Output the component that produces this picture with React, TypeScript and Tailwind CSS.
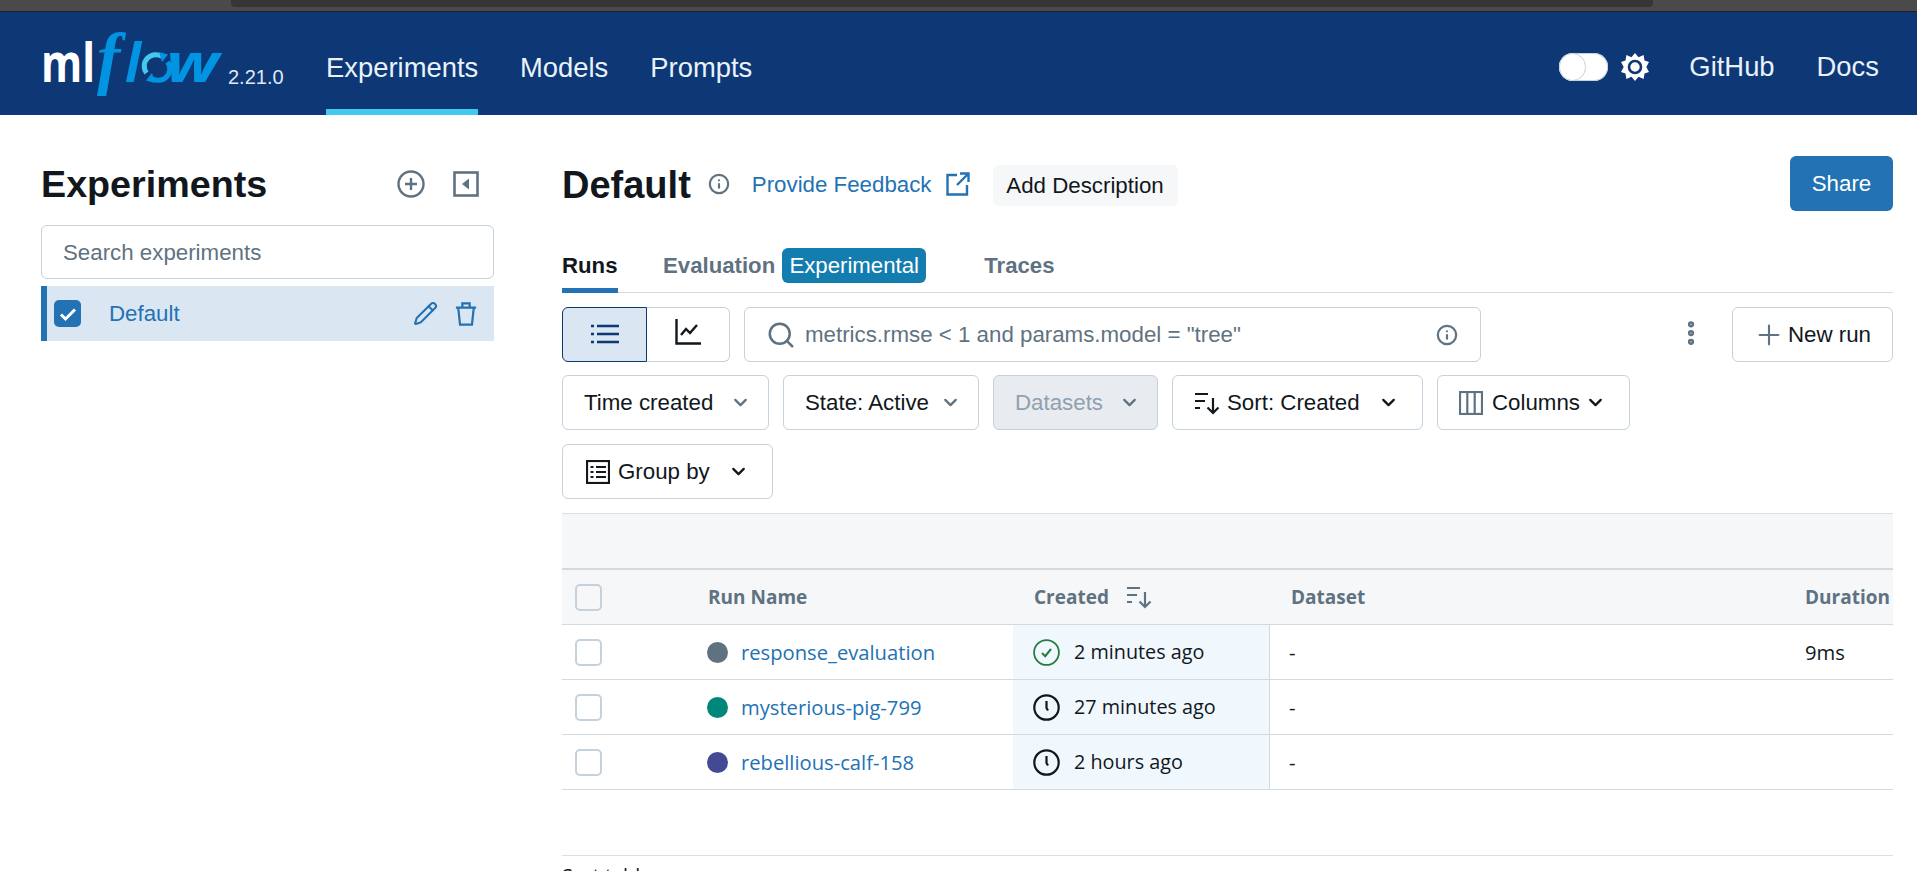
import React from "react";
import { ChevronDown, Plus, Info, Pencil, Search, EllipsisVertical } from "lucide-react";

const SortIcon = ({ className = "" }: { className?: string }) => (
  <svg viewBox="0 0 26 24" className={className} fill="none" stroke="currentColor" strokeWidth="2.2">
    <path d="M1 3h13M1 10h10M1 17h5" />
    <path d="M19 7v15M13.5 16.5l5.5 5.5 5.5-5.5" />
  </svg>
);

const ClockIcon = () => (
  <svg viewBox="0 0 27 27" className="w-[27px] h-[27px] text-[#11171c]" fill="none" stroke="currentColor" strokeWidth="2.2">
    <circle cx="13.5" cy="13.5" r="12.2" />
    <path d="M13.5 7v7l1.5 2.5" />
  </svg>
);

const CheckCircle = () => (
  <svg viewBox="0 0 27 27" className="w-[27px] h-[27px] text-[#277c43]" fill="none" stroke="currentColor" strokeWidth="1.8">
    <circle cx="13.5" cy="13.5" r="12.4" />
    <path d="M9 14l3.2 3.2L18 10" strokeWidth="2" />
  </svg>
);

const Sun = () => (
  <svg viewBox="0 0 28 28" className="w-[28px] h-[28px]">
    <path fill="#fff" d="M14 0l3.5 4.2L22.6 2l.9 5.4 4.5 1.6-2.7 5 2.7 5-4.5 1.6-.9 5.4-5.1-2.2L14 28l-3.5-4.2-5.1 2.2-.9-5.400L0 19l2.7-5L0 9l4.500-1.600.9-5.400 5.100 2.200z" />
    <circle cx="14" cy="14" r="6" fill="#fff" stroke="#0e3776" strokeWidth="2.6" />
  </svg>
);

const Logo = () => (
  <svg viewBox="0 0 188 103" className="w-[188px] h-[103px] shrink-0 ml-[41px]">
    <text x="0" y="70" fontSize="54" fontWeight="700" fill="#fff" fontFamily="Open Sans" textLength="54" lengthAdjust="spacingAndGlyphs">ml</text>
    <text x="56" y="69" fontSize="70" fontWeight="700" fontStyle="italic" fill="#0194e2" fontFamily="Liberation Serif">f</text>
    <text x="84" y="70" fontSize="53" fontWeight="700" fontStyle="italic" fill="#0194e2" fontFamily="Open Sans">l</text>
    <g transform="translate(102 41)" fill="none" strokeWidth="5">
      <path d="M3.500 20A11.500 11.500 0 0 1 19 3.500" stroke="#43c9ed" />
      <path d="M24.500 9A11.500 11.500 0 0 1 9 25.500" stroke="#0194e2" />
      <path d="M16 -1l9 2.500-6 7.500z" fill="#0194e2" />
      <path d="M12 30l-9-2.500 6-7.500z" fill="#0194e2" />
    </g>
    <text x="125" y="70" fontSize="53" fontWeight="700" fontStyle="italic" fill="#0194e2" fontFamily="Open Sans" textLength="53" lengthAdjust="spacingAndGlyphs">w</text>
  </svg>
);

const FilterButton = ({
  children, width, disabled, chevron = "text-[#5f7281]", pad = "pl-[21px] pr-[17px]", justify = "justify-between",
}: { children: React.ReactNode; width: string; disabled?: boolean; chevron?: string; pad?: string; justify?: string }) => (
  <div className={`${width} h-[55px] shrink-0 rounded-[6px] border border-[#c5d1db] flex items-center ${justify} ${pad} text-[22.3px] ${disabled ? "bg-[#e8ebef] text-[#8fa1b0]" : "bg-white text-[#11171c]"}`}>
    {children}
    <ChevronDown className={`w-[21px] h-[21px] ${chevron}`} strokeWidth={2.6} />
  </div>
);

const rows = [
  { name: "response_evaluation", color: "bg-[#5f7281]", time: "2 minutes ago", ok: true, duration: "9ms" },
  { name: "mysterious-pig-799", color: "bg-[#00877a]", time: "27 minutes ago", ok: false, duration: "" },
  { name: "rebellious-calf-158", color: "bg-[#434a93]", time: "2 hours ago", ok: false, duration: "" },
];

const tableFont = "font-['Open_Sans',sans-serif]";

export default function App() {
  return (
    <div className="w-[1917px] h-[871px] overflow-hidden bg-white font-['Liberation_Sans',Arial,sans-serif] text-[#11171c] flex flex-col">
      <div className="h-[12px] bg-[#4a4a4a] border-b border-[#1f1f1f] shrink-0 pl-[231px] pr-[264px]">
        <div className="h-[7px] bg-[#363636] rounded-b-[4px]" />
      </div>

      <header className="h-[103px] shrink-0 bg-[#0e3776] flex items-stretch text-[#e9f2f9]">
        <Logo />
        <span className="self-start mt-[50px] -ml-[1px] text-[20px] w-[98px] text-[#dfe9f2]">2.21.0</span>
        <nav className="flex text-[27.4px] gap-[42px]">
          <a className="h-full flex items-center border-b-[6px] border-[#43c9ed] pt-[14px] w-[152px] whitespace-nowrap">Experiments</a>
          <a className="h-full flex items-center pt-[8px]">Models</a>
          <a className="h-full flex items-center pt-[8px]">Prompts</a>
        </nav>
        <div className="ml-auto flex items-center gap-[13px] pr-[38px] pt-[7px] text-[27.4px]">
          <div className="w-[49px] h-[28px] rounded-full bg-white relative shadow-[inset_0_0_0_1px_#c5d1db]">
            <div className="absolute left-0 top-0 w-[27px] h-[28px] rounded-full bg-white border border-[#c5d1db]" />
          </div>
          <Sun />
          <a className="ml-[27px]">GitHub</a>
          <a className="ml-[29px]">Docs</a>
        </div>
      </header>

      <main className="flex flex-1 min-h-0">
        <aside className="w-[521px] shrink-0 pl-[41px] pt-[35px]">
          <div className="w-[453px]">
            <div className="flex items-center h-[70px]">
              <h1 className="text-[37.7px] font-bold leading-[46px] pb-[2px]">Experiments</h1>
              <svg viewBox="0 0 28 28" className="w-[28px] h-[28px] ml-auto text-[#5f7281] -mt-[2px]" fill="none" stroke="currentColor" strokeWidth="2.4">
                <circle cx="14" cy="14" r="12.5" />
                <path d="M14 8v12M8 14h12" />
              </svg>
              <svg viewBox="0 0 26 26" className="w-[26px] h-[26px] ml-[28px] mr-[15px] text-[#5f7281] -mt-[2px]" fill="none" stroke="currentColor">
                <rect x="1.500" y="1.500" width="23" height="23" strokeWidth="2.6" />
                <path d="M16 7.500v11L9 13z" fill="currentColor" stroke="none" />
              </svg>
            </div>
            <div className="h-[54px] mt-[5px] rounded-[6px] border border-[#c5d1db] flex items-center pl-[21px] pt-[1px] text-[22.3px] text-[#5f7281]">Search experiments</div>
            <div className="h-[55px] mt-[7px] bg-[#dae6f2] border-l-[6px] border-[#2272b4] flex items-center pl-[7px] pr-[17px] text-[22.3px] text-[#2272b4]">
              <div className="w-[27px] h-[27px] rounded-[5px] bg-[#2272b4] flex items-center justify-center">
                <svg viewBox="0 0 20 20" className="w-[20px] h-[20px]" fill="none" stroke="#fff" strokeWidth="3">
                  <path d="M3 10.500l4.500 4.500L17 5.500" />
                </svg>
              </div>
              <span className="ml-[28px]">Default</span>
              <Pencil className="ml-auto w-[25px] h-[25px]" strokeWidth={2} />
              <svg viewBox="0 0 24 26" className="ml-[17px] w-[22px] h-[24px]" fill="none" stroke="currentColor" strokeWidth="2.4">
                <path d="M1 6h22M8 6V1.500h8V6M3.500 6l2 18.500h13l2-18.500" />
              </svg>
            </div>
          </div>
        </aside>

        <section className="w-[1331px] shrink-0 ml-[41px] pt-[41px] flex flex-col">
          <div className="flex items-start h-[55px]">
            <h2 className="text-[38px] font-bold leading-[50px] mt-[4px]">Default</h2>
            <Info className="ml-[17px] mt-[17px] w-[22px] h-[22px] text-[#5f7281]" strokeWidth={2.4} />
            <a className="ml-[22px] mt-[14px] text-[22.3px] leading-[30px] text-[#2272b4] whitespace-nowrap">Provide Feedback</a>
            <svg viewBox="0 0 24 24" className="ml-[14px] mt-[16px] w-[24px] h-[24px] text-[#2272b4]" fill="none" stroke="currentColor" strokeWidth="2.4">
              <path d="M11 3H1.500v19.500H21V13M14 1.500h8.500V10M22.500 1.500L11 13" />
            </svg>
            <div className="ml-[23px] mt-[9px] h-[41px] w-[185px] rounded-[6px] bg-[#f6f7f9] flex items-center justify-center text-[22.3px] whitespace-nowrap">Add Description</div>
            <div className="ml-auto h-[55px] w-[103px] rounded-[6px] bg-[#2272b4] text-white text-[22.3px] flex items-center justify-center">Share</div>
          </div>

          <div className="flex mt-[37px] h-[45px] border-b-[1px] border-[#d1d9e1] text-[22.2px] font-bold text-[#5f7281]">
            <div className="w-[56px] h-[45px] border-b-[5px] border-[#2272b4] text-[#11171c] pt-[3px] leading-[30px] shrink-0">Runs</div>
            <div className="ml-[45px] pt-[3px] leading-[30px]">Evaluation</div>
            <div className="ml-[7px] mt-0 h-[35px] w-[144px] rounded-[6px] bg-[#147db0] text-white font-normal flex items-center justify-center">Experimental</div>
            <div className="ml-[58px] pt-[3px] leading-[30px]">Traces</div>
          </div>

          <div className="flex mt-[14px] h-[55px]">
            <div className="flex w-[168px] h-[55px] shrink-0">
              <div className="w-[85px] rounded-l-[6px] bg-[#dae6f2] border border-[#0e3776] flex items-center justify-center">
                <svg viewBox="0 0 28 20" className="w-[28px] h-[20px] -mt-[2px] text-[#0e3776]" fill="none" stroke="currentColor" strokeWidth="2.4">
                  <path d="M0 2h3M6 2h22M0 10h3M6 10h22M0 18h3M6 18h22" />
                </svg>
              </div>
              <div className="flex-1 rounded-r-[6px] border border-l-0 border-[#c5d1db] flex items-center justify-center">
                <svg viewBox="0 0 26 26" className="w-[26px] h-[26px] -mt-[5px] text-[#11171c]" fill="none" stroke="currentColor" strokeWidth="2.4">
                  <path d="M1.500 0v24.500H26M6 16l5-6 4 4 7-8" />
                </svg>
              </div>
            </div>
            <div className="ml-[14px] w-[737px] rounded-[6px] border border-[#c5d1db] flex items-center pl-[21px] pr-[22px] text-[22.3px] text-[#5f7281]">
              <Search className="w-[30px] h-[30px] shrink-0" strokeWidth={2} />
              <span className="ml-[9px]">metrics.rmse &lt; 1 and params.model = "tree"</span>
              <Info className="ml-auto w-[22px] h-[22px]" strokeWidth={2.4} />
            </div>
            <EllipsisVertical className="ml-[195px] mt-[11px] w-[30px] h-[30px] text-[#5f7281]" strokeWidth={3} />
            <div className="ml-auto w-[161px] rounded-[6px] border border-[#c5d1db] flex items-center pl-[20px] text-[22.3px]">
              <Plus className="w-[32px] h-[32px] text-[#5f7281]" strokeWidth={1.6} />
              <span className="ml-[3px]">New run</span>
            </div>
          </div>

          <div className="flex flex-wrap gap-x-[14px] gap-y-[14px] mt-[13px] w-[1100px]">
            <FilterButton width="w-[207px]">Time created</FilterButton>
            <FilterButton width="w-[196px]">State: Active</FilterButton>
            <FilterButton width="w-[165px]" disabled>Datasets</FilterButton>
            <FilterButton width="w-[251px]" chevron="text-[#11171c]" pad="pl-[21px] pr-[23px]">
              <span className="flex items-center gap-[7px]"><SortIcon className="w-[26px] h-[24px]" />Sort: Created</span>
            </FilterButton>
            <FilterButton width="w-[193px]" chevron="text-[#11171c]" pad="pl-[21px] pr-[23px]">
              <span className="flex items-center gap-[9px]">
                <svg viewBox="0 0 24 24" className="w-[24px] h-[24px] text-[#5f7281]" fill="none" stroke="currentColor" strokeWidth="2.2">
                  <rect x="1" y="1" width="22" height="22" />
                  <path d="M8.300 1v22M15.700 1v22" />
                </svg>
                Columns
              </span>
            </FilterButton>
            <div className="w-[211px] h-[55px] rounded-[6px] border border-[#c5d1db] flex items-center pl-[23px] text-[22.3px] whitespace-nowrap">
              <svg viewBox="0 0 24 24" className="w-[24px] h-[24px] mr-[8px]" fill="none" stroke="#11171c" strokeWidth="2.2">
                <rect x="1" y="1" width="22" height="22" />
                <path d="M4.500 7h3M10 7h10M4.500 12h3M10 12h10M4.500 17h3M10 17h10" />
              </svg>
              Group by
              <ChevronDown className="ml-[18px] w-[21px] h-[21px]" strokeWidth={2.6} />
            </div>
          </div>

          <div className={`mt-[14px] ${tableFont}`}>
            <div className="h-[57px] bg-[#f6f7f9] border-t-[1px] border-b-[2px] border-t-[#d8dfe6] border-b-[#d1d9e1]" />
            <div className="h-[55px] bg-[#f6f7f9] border-b border-[#d1d9e1] grid grid-cols-[146px_305px_257px_514px_1fr] items-center text-[19px] font-bold text-[#5f7281]">
              <div className="pl-[13px]">
                <div className="w-[27px] h-[27px] rounded-[5px] border-2 border-[#c5d1db]" />
              </div>
              <div>Run Name</div>
              <div className="flex items-center gap-[17px] pl-[21px]">
                Created
                <SortIcon className="w-[26px] h-[24px]" />
              </div>
              <div className="pl-[21px]">Dataset</div>
              <div className="pl-[21px] whitespace-nowrap overflow-hidden">Duration</div>
            </div>
            {rows.map((r) => (
              <div key={r.name} className="h-[55px] border-b border-[#d1d9e1] grid grid-cols-[146px_305px_257px_514px_1fr] items-stretch text-[20.2px]">
                <div className="pl-[13px] flex items-center">
                  <div className="w-[27px] h-[27px] rounded-[5px] border-2 border-[#c5d1db]" />
                </div>
                <div className="flex items-center gap-[13px] text-[#2272b4] -ml-[1px]">
                  <span className={`w-[21px] h-[21px] rounded-full ${r.color}`} />
                  {r.name}
                </div>
                <div className="bg-[#f0f7fd] border-r border-[#d1d9e1] flex items-center gap-[14px] pl-[20px] text-[19.8px]">
                  {r.ok ? <CheckCircle /> : <ClockIcon />}
                  {r.time}
                </div>
                <div className="flex items-center pl-[19px]">-</div>
                <div className="flex items-center pl-[21px]">{r.duration}</div>
              </div>
            ))}
            <div className="mt-[65px] border-t border-[#d8dfe6] pt-[5px] leading-[30px] text-[19.8px]">Sort tables</div>
          </div>
        </section>
      </main>
    </div>
  );
}
